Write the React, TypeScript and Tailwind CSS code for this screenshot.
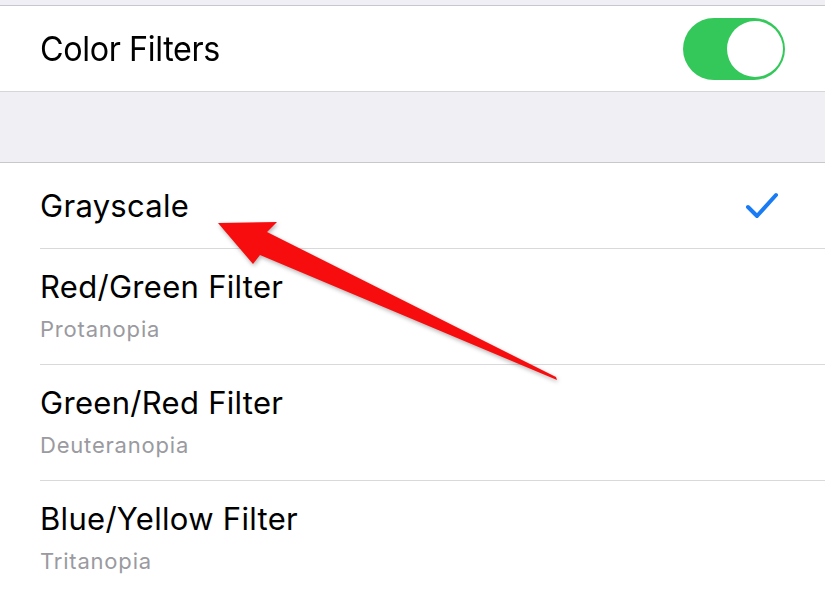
import React from "react";

const font = { fontFamily: "Inter, 'Noto Sans', sans-serif" };

function SubRow({ title, sub, last }: { title: string; sub: string; last?: boolean }) {
  return (
    <div className="relative h-[116px] bg-white">
      <div className="pl-[40px] pt-[18px]">
        <div className="text-[31px] leading-[40px] text-black tracking-[0.3px]">{title}</div>
        <div className="mt-[8px] text-[22px] leading-[28px] text-[#9a9a9f] tracking-[0.8px]">{sub}</div>
      </div>
      {!last && <div className="absolute bottom-0 left-[40px] right-0 h-px bg-[#d9d9dc]" />}
    </div>
  );
}

export default function App() {
  return (
    <div className="relative w-[825px] h-[589px] overflow-hidden bg-[#efeff4]" style={font}>
      <div className="h-[5px] bg-[#efeff4] border-b border-[#c8c7cc] box-content" />
      <div className="h-[85px] bg-white flex items-center justify-between pl-[40px] pr-[40px] border-b border-[#d6d6da] box-content">
        <span className="text-[34px] text-black tracking-[-0.4px] scale-x-[0.95] origin-left inline-block">Color Filters</span>
        <div className="w-[102px] h-[62px] rounded-full bg-[#34c759] flex items-center justify-end pr-[2px]">
          <div className="w-[56px] h-[56px] rounded-full bg-white" />
        </div>
      </div>
      <div className="h-[70px] bg-[#efeff4] border-b border-[#c8c7cc] box-content" />
      <div className="relative h-[86px] bg-white flex items-center justify-between pl-[40px] pr-[46px]">
        <span className="text-[31px] text-black tracking-[0.3px]">Grayscale</span>
        <svg width="34" height="28" viewBox="0 0 34 28">
          <path d="M3 15 L12 24 L31 3" fill="none" stroke="#1a7cf5" strokeWidth="4" strokeLinecap="round" strokeLinejoin="round" />
        </svg>
        <div className="absolute bottom-0 left-[40px] right-0 h-px bg-[#d9d9dc]" />
      </div>
      <SubRow title="Red/Green Filter" sub="Protanopia" />
      <SubRow title="Green/Red Filter" sub="Deuteranopia" />
      <SubRow title="Blue/Yellow Filter" sub="Tritanopia" last />
      <svg className="absolute left-0 top-0 pointer-events-none" width="825" height="589" viewBox="0 0 825 589" style={{ filter: "drop-shadow(1px 2px 2px rgba(0,0,0,0.3))" }}>
        <polygon points="218,223 277,222 267,232 556,377 557,380 260,255 253,264" fill="#f70d0d" />
      </svg>
    </div>
  );
}
